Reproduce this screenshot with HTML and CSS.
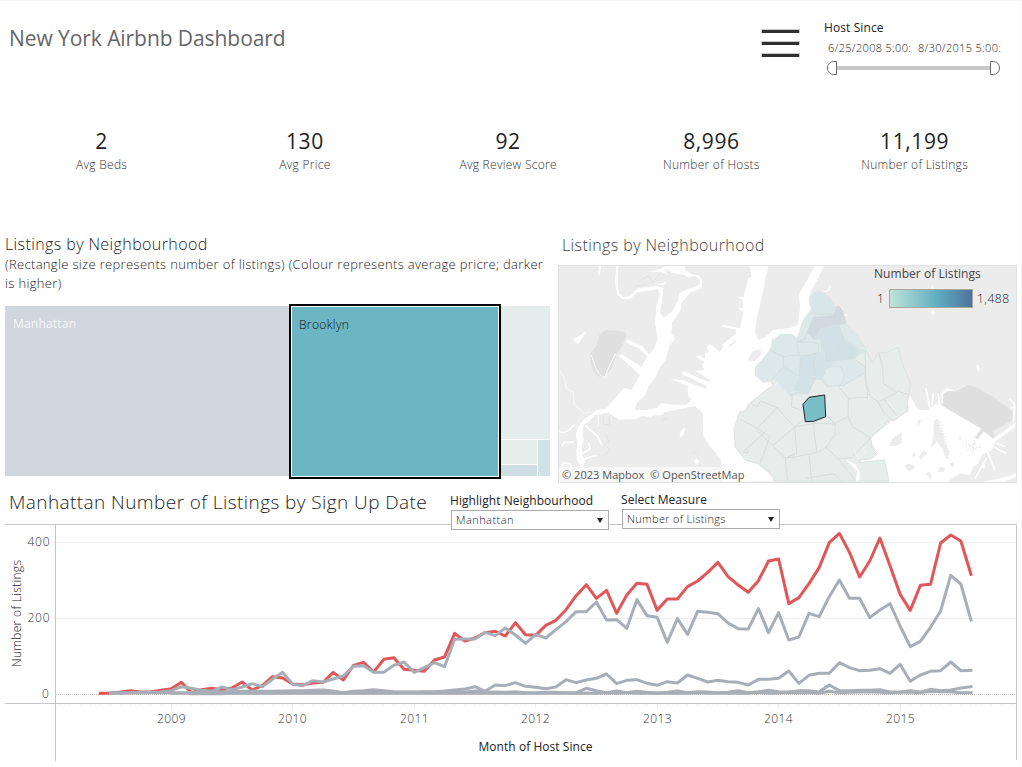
FILE: index.html
```html
<!DOCTYPE html>
<html lang="en">
<head>
<meta charset="utf-8">
<title>New York Airbnb Dashboard</title>
<link rel="stylesheet" href="styles.css">
</head>
<body>
<div class="dashboard">
  <header class="header">
    <h1 class="title">New York Airbnb Dashboard</h1>
    <svg class="menu" width="40" height="30" viewBox="0 0 40 30"><path d="M1 1h39v4H1zM1 13h39v4H1zM1 25h39v4H1z" fill="#c9c9c9"/><path d="M2 2h37v3H2zM2 14h37v3H2zM2 26h37v3H2z" fill="#2f2f2f"/></svg>
    <div class="filter">
      <div class="filter-name">Host Since</div>
      <div class="dates"><span class="date-from">6/25/2008 5:00:</span><span class="date-to">8/30/2015 5:00:</span></div>
      <svg class="slider" width="176" height="16" viewBox="0 0 176 16"><path d="M11 8h154" stroke="#c8c8c8" stroke-width="4"/><path d="M10.500 1.500v13H7.500C4.500 14.500 1.500 12 1.500 8s3-6.500 6-6.500zM164.500 1.500v13h3c3 0 6-2.500 6-6.500s-3-6.500-6-6.500z" fill="#fff" stroke="#666"/></svg>
    </div>
  </header>

  <section class="kpis">
    <div class="kpi"><div class="kpi-value">2</div><div class="kpi-name">Avg Beds</div></div>
    <div class="kpi"><div class="kpi-value">130</div><div class="kpi-name">Avg Price</div></div>
    <div class="kpi"><div class="kpi-value">92</div><div class="kpi-name">Avg Review Score</div></div>
    <div class="kpi"><div class="kpi-value">8,996</div><div class="kpi-name">Number of Hosts</div></div>
    <div class="kpi"><div class="kpi-value">11,199</div><div class="kpi-name">Number of Listings</div></div>
  </section>

  <section class="middle">
    <div class="tree-panel">
      <h2 class="panel-title">Listings by Neighbourhood</h2>
      <p class="panel-note"><span class="note-first">(Rectangle size represents number of listings) (Colour represents average pricre; darker</span><br><span class="note-second">is higher)</span></p>
      <div class="treemap">
        <div class="tile manhattan"><span class="manhattan-name">Manhattan</span></div>
        <div class="tile brooklyn"><span class="brooklyn-name">Brooklyn</span></div>
        <div class="rest">
          <div class="tile queens"></div>
          <div class="tile bronx"></div>
          <div class="tile staten"></div>
          <div class="tile other"></div>
        </div>
      </div>
    </div>
    <div class="map-panel">
      <h2 class="panel-title">Listings by Neighbourhood</h2>
      <div class="map">
        <svg class="map-canvas" width="459" height="218" viewBox="0 0 459 218">
          <rect width="459" height="218" fill="#ececec"/>
          <!-- Hudson, Upper Bay, Newark Bay -->
          <g transform="translate(-3 -5) scale(.33333)">
            <path fill="#fff" d="M584 18H640L636 40 630 55 628 80 620 110 614 140 606 170 600 216 610 241 630 232 655 211 705 204 728 195 736 140 730 106 757 60 780 16H807L790 55 778 75 765 100 768 145 745 190 735 240 650 235 650 270 600 320 640 360 655 375 580 430 540 500 540 560 590 600 655 650V664H500V605L480 575 465 560 445 528 443 460 420 438 365 449 330 456 318 466 294 466 286 474 264 467 240 478 190 478 160 458 122 464 100 487 88 492 82 515 86 540 80 560 84 590 90 605 86 618 79 621 65 600 64 570 68 550 62 522 70 500 85 480 125 451 153 447 175 420 207 384 230 390 255 345 192 288 200 283 260 322 276 288 250 265 213 247 217 238 264 260 283 285 300 260 308 235 300 190 304 140 315 100 309 88 245 97 226 117 203 117 188 106 182 83 180 60 184 18 190 18 188 70 192 100 205 111 225 109 250 84 305 78 325 85 320 130 315 160 327 173 350 155 369 124 372 100 400 86 434 75 435 59 420 48 400 52 385 44 350 38 340 28 310 36 275 34 310 30 330 18H390L390 30 410 42 432 47 442 60 440 84 405 98 380 128 377 150 350 188 352 200 348 220 360 235 344 258 331 300 310 330 302 350 280 380 270 405 245 430 240 450 270 450 305 444 320 428 350 434 395 434 410 418 400 409 398 392 400 379 345 357 385 361 453 387 457 379 380 342 385 333 462 367 465 359 420 332 448 330 440 314 450 307 422 290 436 286 450 298 450 280 462 276 455 262 465 251 494 275 505 262 502 253 545 220 540 208 500 200 505 195 555 205 566 155 548 145 565 144 562 118 545 112 565 112 580 55 590 50Z"/>
            <path fill="#fff" d="M131 18h8l-6 32-4-10zM52 238l15-6 24-18-5 15-17 22-6-2zM374 520l11-16 6 3-7 21-9 3zM417 602l7-6 9 8-5 10-9-2zM300 28l40 18-14-18zM350 20l25 23 10-25zM300 75l35-9-10 10z"/>
            <path fill="none" stroke="#fff" stroke-width="5" d="M90 495l18 18 20 16 13 27M10 514l17 4 16-8 14-16M20 558l8-10 30-2M84 580l22-14-6-18M86 600l20-10 20-2M20 620l8-12 18 4 4 14"/>
            <path fill="none" stroke="#f8f8f8" stroke-width="3" d="M15 332l12 20 8 36 20 8 3 40 32 25 15-6M130 464v36"/>
            <path fill="#dfdfdf" d="M133 225l20-15 35 2 22 4 5 10-15 35-15 22-12 35-20 28-10 8-15-7-14-17-8-25V280l20-24z"/>
            <path fill="none" stroke="#fff" stroke-width="3" d="M109 285l12 35 10 20 12 12 7-2 12-30 20-40"/>
            <path fill="#ececec" stroke="#e0e0e0" d="M579 300l15-26 20-4 5 12-20 20z"/>
            <path fill="none" stroke="#e2e2e2" stroke-width="3" d="M250 65l30-18 15 20 18-25M240 78l40-6M145 468v25h18v-25M150 520l12 24-15 12 18 12-16 18M320 480l18-6M415 582l12-10"/>
            <path fill="#ececec" d="M520 258l12-10 3 3-12 10zM533 246l8-6v7l-6 5z"/>
          </g>
          <!-- Jamaica Bay -->
          <g transform="translate(302 110) scale(.33333)">
            <path fill="#fff" d="M95 138L148 108 142 75 150 60 165 90 175 104 205 106 225 88 250 92 365 160 345 188 355 192 372 170 400 192 470 140 462 160 405 200 395 225 365 240 355 265 340 275 330 300 300 295 260 322H85L72 256 0 266V258L48 235 32 190ZM370 320L440 305 470 294V306L430 320Z"/>
            <path fill="#dfdfdf" d="M246 92V60L270 47 285 50 325 30 355 38 370 50 400 66 445 98 458 112V136L400 168 404 184 398 190 372 168 350 192 345 186 365 162Z"/>
            <path fill="#ececec" d="M87 210L98 190 125 172V203L110 213 90 213ZM222 138L234 130 240 155 250 180 254 205 268 228 262 256 252 240 249 222 230 200 212 218 220 185ZM133 272L145 266 163 272 163 282 147 288ZM170 150L176 134 184 135 178 148ZM156 240L164 232 168 242 160 246ZM177 245L190 225 202 235 190 245 183 255ZM195 295L208 290 215 300 214 314ZM232 290L240 276 255 278 252 290ZM270 265L280 262 284 276 275 276ZM296 192L303 184 302 195Z"/>
            <path fill="none" stroke="#fff" stroke-width="5" d="M247 85V55L262 43 278 46M198 40L210 100M220 55L216 90M234 55L238 92M448 72L464 88 460 140M452 98L466 96M400 214L420 226 440 236M410 205L435 215M382 230L405 284M380 250L345 310M370 260L372 280"/>
            <path fill="none" stroke="#e6e6e6" stroke-width="4" stroke-dasharray="4 5" d="M318 215L348 206M322 226L362 216M318 198L354 230M342 195L338 235M240 140L258 205 264 250"/>
          </g>
          <g transform="translate(162 -5) scale(.33333)">
            <path fill="#fff" d="M632 155l7-8 6 10-7 11zM768 318l7-3 6 12-6 12z"/>
            <path fill="none" stroke="#fff" stroke-width="3" d="M637 75v70M310 95l14-2 7-14M370 162l12 6"/>
            <!-- Brooklyn neighbourhoods -->
            <path fill="#e6edeb" stroke="#dadfde" stroke-width="2.500" d="M283 98L298 95 312 99 330 115 338 132 348 141 357 138 368 152 378 190 388 205 412 225 418 240 435 262 440 275 457 308 476 278 500 278 535 262 545 305 572 372 566 400 560 453 522 483 508 475 483 505 452 534 456 564 473 581 455 596 420 600 418 607 494 600 507 664H165L145 633 118 612 75 600 45 560 42 505 60 455 78 453 92 430 135 392 158 377 155 362 130 367 108 347 106 322 135 300 150 270 160 240 182 223H215L232 235 250 180 275 148 268 125 270 110Z"/>
            <path fill="#dce8e9" d="M283 98L312 99 330 115 348 141 378 190 412 225 440 275 402 296 435 320 433 340 372 376 320 378 304 355 275 358 265 400 212 410 165 360 130 367 106 345V322L150 270 160 240 182 223H215L232 235 250 180 275 148 268 125Z"/>
            <path fill="#d7e6e9" d="M283 98L312 99 330 115 338 132 348 141 343 161 308 168 275 148 268 125 270 110Z"/>
            <path fill="#d1d8df" d="M348 141L357 138 368 152 378 190 301 205 284 239 260 217 280 171 340 165Z"/>
            <path fill="#d3e1e6" d="M301 205L355 194 372 236 355 270 306 275 301 238 284 235Z"/>
            <path fill="#d9e6ea" d="M190 323L237 348 217 393 212 410 165 360Z"/>
            <path fill="#d3e2e7" d="M242 290L286 278 282 313 288 350 264 402 220 390 240 345Z"/>
            <path fill="#d5e3e8" d="M286 278L314 275 338 305 335 322 312 330 306 357 285 352Z"/>
            <path fill="#d0e0e5" d="M344 270L364 236 404 264 416 274 398 296 316 303 318 275Z"/>
            <path fill="#e1ebeb" d="M310 348L318 325 335 320 363 321 373 340 366 370 356 378 325 378Z"/>
            <path fill="none" stroke="#d3dbdb" stroke-width="2.500" d="M275 148L288 164 266 209 254 237 230 247M288 164L343 161M378 190L356 194 372 236 418 270 440 275M232 245L295 250 296 277 274 285 237 288 231 251M150 270L190 290 237 284M190 291L190 321 238 348 242 290M190 321L155 360M288 278L282 313 288 351 264 402M318 272V304L402 296 436 321 434 340 371 376 320 380 304 358 275 355M402 296L421 272M310 348L318 325 335 320 363 321 373 340 366 370 356 378"/>
            <path fill="none" stroke="#d8dddc" stroke-width="3" d="M356 380L385 415 384 470 344 490 320 467 280 490M434 340L443 412 385 415M435 275L438 365 451 410 474 425 505 412 535 395 563 403M476 278L488 320 490 370 530 398M384 470L398 500 452 534M474 425L490 455 510 475M492 418L530 468M217 403L214 440 244 450M248 480L224 501 170 443 112 505 150 530 120 610M92 430L110 440 122 423 175 444M60 478L112 505M140 512L70 575 82 580 85 570M110 512L158 557 224 501 230 580 196 594 158 557M224 501L280 490 290 578 230 590 196 594 202 662M282 490L345 492V525L318 562 290 578M268 588L275 664M318 562L355 597 395 592 452 534M255 655L342 641 365 664M355 597L405 660M210 406L217 403 235 397 264 402"/>
            <path fill="none" stroke="#eff3f2" stroke-width="3" d="M402 565L412 592M425 558L438 582M505 425L538 465"/>
            <path fill="#fff" d="M375 598L407 613 420 638 417 664H407L412 634 396 618Z"/>
            <path fill="#7abfc8" stroke="#222" stroke-width="3" d="M249 433L267 412 314 405 317 470 281 484 256 485Z"/>
          </g>
          <rect x=".5" y=".5" width="458" height="217" fill="none" stroke="#e2e2e2"/>
        </svg>
        <div class="legend">
          <div class="legend-name">Number of Listings</div>
          <div class="legend-scale"><span class="legend-min">1</span><span class="legend-ramp"></span><span class="legend-max">1,488</span></div>
        </div>
        <div class="credits"><span class="credit-mapbox">© 2023 Mapbox</span><span class="credit-osm">© OpenStreetMap</span></div>
      </div>
    </div>
  </section>

  <section class="trend">
    <h2 class="trend-title">Manhattan Number of Listings by Sign Up Date</h2>
    <div class="control highlight"><div class="control-name highlight-name">Highlight Neighbourhood</div><div class="select"><span class="select-highlight">Manhattan</span><i class="caret"></i></div></div>
    <div class="control measure"><div class="control-name measure-name">Select Measure</div><div class="select"><span class="select-measure">Number of Listings</span><i class="caret"></i></div></div>
    <svg class="chart" width="1022" height="243" viewBox="0 524 1022 243">
      <path d="M52 542.500H1016M52 618.500H1016" stroke="#f0f0f0"/>
      <path d="M56 694.500H1016" stroke="#bbb" stroke-dasharray="1 1"/>
      <path id="ticks" stroke="#ebebeb" fill="none"/>
      <g id="lines" transform="translate(0 480) scale(.33333)" fill="none" stroke-width="9" stroke-linejoin="round"></g>
      <path d="M5 524.500H1016.500V760M5 703.500H1016M55.500 524V761" fill="none" stroke="#c6c6c6"/>
      <g class="axis">
        <text x="27.500" y="546" textLength="22">400</text><text x="27.500" y="622" textLength="22">200</text><text x="42" y="698">0</text>
        <text x="157" y="723" textLength="28.500">2009</text><text x="278" y="723" textLength="28.500">2010</text><text x="400" y="723" textLength="28.500">2011</text><text x="521" y="723" textLength="28.500">2012</text><text x="643" y="723" textLength="28.500">2013</text><text x="764" y="723" textLength="28.500">2014</text><text x="886" y="723" textLength="28.500">2015</text>
      </g>
      <text class="axis-name" transform="translate(21 667) rotate(-90)" textLength="107">Number of Listings</text>
      <text class="axis-name month" x="478.500" y="751" textLength="114">Month of Host Since</text>
    </svg>
  </section>
</div>
<script src="chart.js"></script>
</body>
</html>
```

FILE: styles.css
```css
* { box-sizing: border-box; }
body { margin: 0; background: #fff; color: #222; font-family: "Open Sans", "Noto Sans", sans-serif; font-size: 12px; font-weight: 300; }
.dashboard { width: 1022px; height: 767px; overflow: hidden; display: flex; flex-direction: column; border-top: 1px solid #f7f7f7; border-right: 1px solid #f8f8f8; }
.dashboard span, .dashboard h1, .dashboard h2, .dashboard p, .filter-name, .kpi-name, .kpi-value, .legend-name, .control-name { white-space: nowrap; }
h1, h2, p { margin: 0; }

.header { height: 124px; padding: 19px 0 0 9px; display: flex; align-items: flex-start; }
.title { width: 751px; padding-top: 3px; font-size: 21px; line-height: 30px; font-weight: 400; color: #666; letter-spacing: -.07px; }
.menu { margin-top: 8px; }
.filter { margin-left: 24px; }
.filter-name { font-size: 12px; font-weight: 400; line-height: 16px; letter-spacing: .1px; }
.dates { display: flex; gap: 7px; padding-left: 4px; font-size: 11px; line-height: 16px; margin-top: 4px; }
.date-from, .date-to { width: 83px; letter-spacing: .32px; }
.slider { display: block; margin: 4px 0 0 2px; }

.kpis { height: 110px; display: grid; grid-template-columns: repeat(5, 203.25px); text-align: center; }
.kpi-value { font-size: 21px; line-height: 30px; font-weight: 400; padding-top: 1px; margin-bottom: 1px; letter-spacing: .6px; }
.kpi-name { font-size: 12px; line-height: 16px; color: #333; letter-spacing: .28px; }

.middle { height: 249px; display: grid; grid-template-columns: 553px 459px; padding-left: 5px; }
.panel-title { margin-top: -1px; font-size: 16px; line-height: 20px; font-weight: 300; letter-spacing: .4px; }
.panel-note { font-size: 13px; line-height: 19px; padding-top: 1px; letter-spacing: .34px; }
.treemap { display: grid; grid-template-columns: 284px 212px 49px; height: 175px; margin: 11px 0 0; }
.tile { height: 170px; margin-top: 2px; }
.manhattan { background: #cfd6dd; padding: 9px 8px; color: #f7f7f7; font-weight: 400; letter-spacing: .2px; }
.brooklyn { height: 175px; margin-top: 0; padding: 10px 8px; background: #6cb6c4; color: #111; border: 2px solid #000; box-shadow: inset 0 0 0 1px #fff; letter-spacing: .35px; }
.rest { height: 170px; margin-top: 2px; display: grid; grid-template-columns: 36px 12px; grid-template-rows: 133px 24px 11px; gap: 1px; }
.rest .tile { height: auto; margin: 0; }
.queens { grid-column: 1 / 3; background: #e5edec; }
.bronx { background: #e7efec; }
.staten { grid-column: 2; grid-row: 2 / 4; background: #d1e2e7; }
.other { grid-column: 1; grid-row: 3; background: #cfdde5; }

.map-panel .panel-title { padding: 1px 0 0 4px; color: #444; }
.map { position: relative; margin-top: 10px; height: 218px; }
.map-canvas { display: block; }
.legend { position: absolute; left: 316px; top: 1px; }
.legend-name { font-weight: 400; line-height: 16px; color: #444; letter-spacing: .05px; }
.legend-scale { display: flex; align-items: center; margin: 6px 0 0 3px; height: 20px; }
.legend-min { width: 12px; }
.legend-ramp { width: 84px; height: 19px; border: 1px solid #a9a89b; background: linear-gradient(90deg, #bfe3d9, #5fadc1 58%, #4d739b); }
.legend-max { margin-left: 4px; letter-spacing: .5px; }
.credits { position: absolute; left: 1px; bottom: 1px; display: flex; gap: 6px; width: 188px; height: 15px; padding-left: 3px; background: rgba(255,255,255,.6); font: 400 11px/15px "Open Sans", sans-serif; color: #555; letter-spacing: .03px; }

.trend { position: relative; height: 283px; }
.trend-title { height: 40px; padding: 5px 0 0 9px; font-size: 19px; line-height: 26px; font-weight: 300; letter-spacing: .42px; }
.control { position: absolute; width: 158px; }
.highlight { left: 451px; top: 9px; }
.measure { left: 622px; top: 8px; }
.control-name { margin-left: -1px; font-size: 12px; line-height: 16px; font-weight: 400; letter-spacing: .06px; }
.select { margin-top: 1px; height: 20px; border: 1px solid #aaa; background: #fff; font-size: 11px; line-height: 18px; padding: 0 5px 0 4px; display: flex; justify-content: space-between; align-items: center; letter-spacing: .3px; }
.select-highlight { letter-spacing: .45px; }
.caret { border: 3.5px solid transparent; border-top: 5px solid #222; border-bottom: 0; }
.chart { display: block; }
.axis { font-size: 12px; fill: #333; }
.axis-name { font-size: 12px; fill: #222; }
.month { font-weight: 400; }
```

FILE: chart.js
```js
// Monthly series, June 2008 to August 2015; vertical positions in thirds of a pixel.
const manhattan = [640,639,636,632,636,635,631,626,607,638,629,625,629,624,606,630,617,590,594,612,614,609,607,577,600,556,547,576,538,533,568,571,574,540,531,460,483,474,458,454,468,428,464,466,436,421,389,347,314,355,331,400,345,310,313,391,357,357,320,303,277,247,290,315,337,302,243,237,371,353,311,263,188,160,217,291,243,174,257,343,391,316,313,189,165,183,283];
const brooklyn = [,638,638,638,637,637,636,632,620,625,631,634,621,629,621,611,620,598,577,613,617,602,606,597,588,559,557,577,577,556,546,577,563,548,560,478,477,477,457,467,444,465,490,463,474,449,425,395,395,366,420,419,445,359,407,412,487,416,463,394,397,401,429,446,447,386,458,398,480,471,400,410,350,300,355,355,413,390,371,438,500,484,442,393,286,312,420];
const queens = [,640,640,639,639,638,638,638,638,638,636,636,635,635,634,633,634,634,633,632,632,631,630,633,638,634,632,629,632,635,636,636,635,635,633,630,627,620,634,615,617,608,619,622,626,621,599,608,600,595,582,611,601,599,610,616,605,609,585,595,606,601,605,607,615,598,598,595,573,610,586,580,580,548,563,572,571,566,580,553,604,585,574,572,546,572,571];
const bronx = [,,,,,,,640,640,640,640,639,639,639,639,638,638,638,637,637,637,637,636,638,639,637,637,636,637,637,637,637,637,637,637,636,636,633,637,636,637,635,638,638,637,637,638,638,625,632,638,633,638,634,637,639,637,633,638,635,636,638,637,632,638,635,631,635,636,632,632,636,615,632,632,631,631,629,636,636,632,636,628,632,630,624,620];
const staten = [,,,,,,,,,641,641,641,641,640,640,640,640,640,640,640,640,640,640,640,640,640,640,640,640,640,640,640,640,640,640,640,639,640,640,640,640,640,640,640,639,640,640,640,639,640,638,640,638,640,640,640,640,640,640,638,640,640,639,640,640,637,640,639,638,638,638,640,634,638,637,636,635,637,639,637,637,638,634,635,635,638,638];
const ns = "http://www.w3.org/2000/svg";
const group = document.getElementById("lines");
for (const [values, color] of [[manhattan, "#e15759"], [brooklyn, "#a8aeb8"], [queens, "#a8aeb8"], [bronx, "#a8aeb8"], [staten, "#a8aeb8"]]) {
  const line = document.createElementNS(ns, "polyline");
  const points = [];
  values.forEach((y, i) => points.push((301 + i * 30.372).toFixed(1) + "," + y));
  line.setAttribute("points", points.join(" "));
  line.setAttribute("stroke", color);
  line.setAttribute("stroke-linecap", "square");
  group.appendChild(line);
}
let ticks = "";
for (let i = -4; i <= 90; i++) {
  const x = Math.floor(100.3 + i * 10.124) + .5;
  ticks += `M${x} 704v${(i + 5) % 12 === 0 ? 4 : 1}`;
}
document.getElementById("ticks").setAttribute("d", ticks);
```
